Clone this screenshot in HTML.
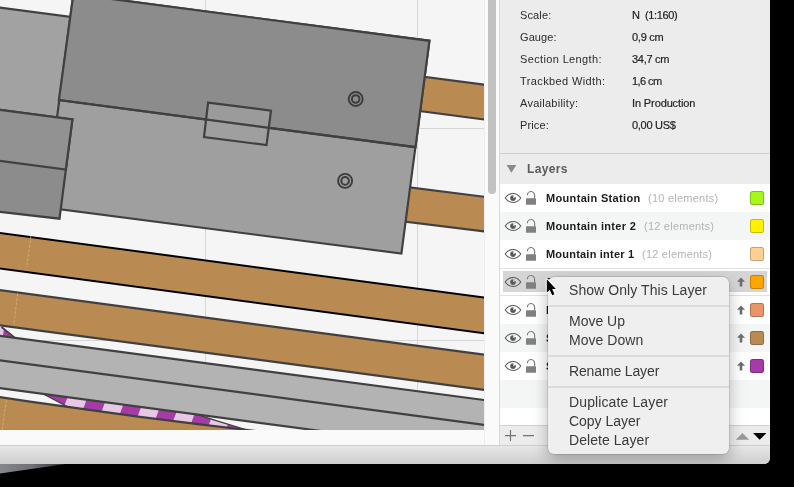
<!DOCTYPE html>
<html>
<head>
<meta charset="utf-8">
<style>
html,body{margin:0;padding:0;background:#000;}
body{width:794px;height:487px;position:relative;overflow:hidden;font-family:"Liberation Sans",sans-serif;}
#win{position:absolute;left:0;top:0;width:770px;height:464px;background:#ececec;border-bottom-right-radius:6px;overflow:hidden;}
#canvas{position:absolute;left:0;top:0;width:484px;height:430px;display:block;}
#vscroll{position:absolute;left:484px;top:0;width:15px;height:445px;background:#fafafa;box-sizing:border-box;border-left:1px solid #ededed;}
#vthumb{position:absolute;left:3px;top:-20px;width:8px;height:214px;border-radius:4px;background:#c2c2c2;}
#hscroll{position:absolute;left:0;top:430px;width:499px;height:15px;background:#fafafa;}
#pborder{position:absolute;left:499px;top:0;width:1px;height:445px;background:#d9d9d9;}
#bottom{position:absolute;left:0;top:445px;width:770px;height:19px;background:linear-gradient(#e7e7e7,#cecece);border-top:1px solid #cfcfcf;box-sizing:border-box;}
#panel{position:absolute;left:500px;top:0;width:270px;height:445px;background:#ececec;}
.lab,.val{position:absolute;font-size:11px;line-height:14px;color:#2b2b2b;white-space:nowrap;}
.lab{left:20px;}
.val{left:132px;color:#1f1f1f;-webkit-text-stroke:0.2px #1f1f1f;}
#sep{position:absolute;left:0;top:153px;width:270px;height:1px;background:#d0d0d0;}
#lhdr{position:absolute;left:27px;top:162px;letter-spacing:0.35px;font-size:12px;font-weight:bold;color:#5a5a5a;line-height:15px;}
#tri{position:absolute;left:7px;top:165px;width:0;height:0;border-left:4.7px solid transparent;border-right:4.7px solid transparent;border-top:8px solid #8a8a8a;}
#list{position:absolute;left:0;top:184px;width:270px;height:241px;background:#fff;overflow:hidden;}
.row{position:absolute;left:0;width:270px;height:28px;}
.row.alt{background:#f4f5f5;}
.nm{position:absolute;left:46px;top:7px;font-size:11px;font-weight:bold;color:#1c1c1c;line-height:14px;white-space:nowrap;}
.cnt{position:absolute;top:7px;font-size:11px;color:#b4b4b4;line-height:14px;white-space:nowrap;}
.sw{position:absolute;left:250px;top:7px;width:14px;height:14px;border-radius:2.5px;box-sizing:border-box;border:1px solid rgba(0,0,0,0.22);}
.eye{position:absolute;left:4px;top:7px;width:18px;height:14px;}
.lock{position:absolute;left:25px;top:6px;width:12px;height:16px;}
.up{position:absolute;left:236px;top:9px;width:10px;height:10px;}
#bbar{position:absolute;left:0;top:425px;width:270px;height:20px;background:#ececec;border-top:1px solid #d2d2d2;box-sizing:border-box;}
#menu{position:absolute;left:547.5px;top:277px;width:181px;height:177px;background:#efefef;border-radius:6px;box-shadow:0 0 0 0.5px rgba(0,0,0,0.22),0 6px 16px rgba(0,0,0,0.28);}
.mi{position:absolute;left:21.2px;font-size:14px;line-height:19px;color:#3a3a3a;white-space:nowrap;}
.ms{position:absolute;left:0;width:181px;height:2px;background:#dcdcdc;}
.row.sel{border-top:1px solid #e2e2e2;border-bottom:1px solid #e2e2e2;box-sizing:border-box;}
.row.sel .eye,.row.sel .lock,.row.sel .up,.row.sel .sw,.row.sel .nm{margin-top:-1px;}
.selbg{position:absolute;left:3px;top:2px;width:264px;height:21px;background:#d5d5d5;}
.lab,.val,.nm,.cnt,.mi,#lhdr{will-change:transform;}
</style>
</head>
<body>
<svg style="position:absolute;left:0;top:464px" width="80" height="12" viewBox="0 0 80 12"><defs><linearGradient id="wg" x1="0" y1="0" x2="1" y2="0"><stop offset="0" stop-color="#85878d"/><stop offset="0.5" stop-color="#6e7076"/><stop offset="1" stop-color="#2a2b2d"/></linearGradient></defs><polygon points="0,0 66,0 0,9.5" fill="url(#wg)"/></svg>
<div id="win">
<svg id="canvas" width="484" height="430" viewBox="0 0 484 430">
<rect x="0" y="0" width="484" height="430" fill="#f5f5f5"/>
<!-- grid -->
<g stroke="#d6d6d6" stroke-width="1">
<line x1="205.5" y1="0" x2="205.5" y2="430"/>
<line x1="417.5" y1="0" x2="417.5" y2="430"/>
<line x1="0" y1="128.5" x2="484" y2="128.5"/>
<line x1="0" y1="340.5" x2="484" y2="340.5"/>
</g>
<!-- brown stubs right of platform -->
<g fill="#b98b52" stroke="#404040" stroke-width="2.2">
<polygon points="380,71 490,85.3 490,120.3 380,105.8"/>
<polygon points="380,183.6 490,197.5 490,232.2 380,218.6"/>
</g>
<!-- upper-left light rect -->
<polygon points="-5,6.9 90,19.4 70,140 -5,130" fill="#a2a2a2" stroke="#404040" stroke-width="2.2"/>
<!-- big platform -->
<polygon points="73.4,-6 429.4,40.8 401.4,253.6 45.1,207.4" fill="#9f9f9f" stroke="#404040" stroke-width="2.2" stroke-linejoin="miter"/>
<polygon points="73.4,-6 429.4,40.8 415.5,147.2 58.9,100" fill="#8c8c8c" stroke="#404040" stroke-width="2.2"/>
<!-- small rect -->
<polygon points="208.1,102.6 271,110.6 266.5,145.1 204,137" fill="#9f9f9f" fill-opacity="0.8" stroke="#404040" stroke-width="2.2"/>
<line x1="58.9" y1="100" x2="415.5" y2="147.2" stroke="#404040" stroke-width="2.2"/>
<!-- circles -->
<g fill="none" stroke="#3c3c3c">
<circle cx="355.7" cy="99" r="7" stroke-width="1.9"/>
<circle cx="355.7" cy="99" r="3.8" stroke-width="2"/>
<circle cx="345.1" cy="180.9" r="7" stroke-width="1.9"/>
<circle cx="345.1" cy="180.9" r="3.8" stroke-width="2"/>
</g>
<!-- lower-left rect -->
<polygon points="-5,109.2 72.4,119.4 59.5,218.7 -5,211.2" fill="#8c8c8c" stroke="#404040" stroke-width="2.2"/>
<polygon points="-5,109.2 72.4,119.4 65.8,169.6 -5,160.1" fill="#929292" stroke="#404040" stroke-width="2.2"/>
<!-- long brown strips -->
<polygon points="-5,232.3 490,298.4 490,334 -5,267.9" fill="#b98b52" stroke="#000" stroke-width="2"/>
<polygon points="-5,289.5 490,355.5 490,390.6 -5,324.6" fill="#b98b52" stroke="#404040" stroke-width="2.2"/>
<!-- purple -->
<clipPath id="pc"><polygon points="40,392.2 170,406.4 194.4,413.9 250,431 75,431 75,410.7"/></clipPath>
<g clip-path="url(#pc)"><rect x="30" y="380" width="230" height="60" fill="#a63aa6"/><polygon points="74.1,380 94.1,380 73.6,434 53.6,434" fill="#e6c8e6"/><polygon points="113.5,380 132.7,380 112.2,434 93.0,434" fill="#e6c8e6"/><polygon points="151.4,380 170.3,380 149.8,434 130.9,434" fill="#e6c8e6"/><polygon points="188.7,380 207.5,380 187.0,434 168.2,434" fill="#e6c8e6"/><polygon points="225.8,380 244.8,380 224.2,434 205.3,434" fill="#e6c8e6"/></g>
<polygon points="40,392.2 170,406.4 194.4,413.9 250,431 75,431 75,410.7" fill="none" stroke="#404040" stroke-width="1.3"/>
<polygon points="-2,325.5 1.9,327.3 14.2,337.2 -2,335.5" fill="#a63aa6"/>
<polygon points="-2,325.5 1.9,327.3 3.9,328.9 2.9,336 -2,335.5" fill="#e6c8e6"/>
<line x1="1.5" y1="327" x2="14.4" y2="337.4" stroke="#404040" stroke-width="1.8"/>
<!-- grey strips -->
<polygon points="-5,335.3 490,400.8 490,453.6 -5,387.5" fill="#b3b3b3" stroke="#404040" stroke-width="2.2"/>
<line x1="-5" y1="359.6" x2="490" y2="425.7" stroke="#404040" stroke-width="2.2"/>
<!-- bottom brown -->
<polygon points="-5,396.4 30,401.7 100,411.3 140,416.9 200,424.3 260,431.5 260,440 -5,440" fill="#b98b52" stroke="#404040" stroke-width="2.2"/>
<g stroke="#d8b98c" stroke-width="0.8" stroke-dasharray="3 1.5" opacity="0.85">
<line x1="30.9" y1="236" x2="26.6" y2="268.5"/>
<line x1="17.6" y1="293.5" x2="13.8" y2="325.5"/>
<line x1="6.3" y1="400" x2="2.2" y2="430"/>
</g>
</svg>
<div id="hscroll"></div>
<div id="vscroll"><div id="vthumb"></div></div>
<div id="pborder"></div>
<div id="panel">
<div class="lab" style="top:8px;letter-spacing:0.13px">Scale:</div><div class="val" style="top:8px;letter-spacing:-0.37px">N&nbsp; (1:160)</div>
<div class="lab" style="top:30px;letter-spacing:0.07px">Gauge:</div><div class="val" style="top:30px;letter-spacing:-0.26px">0,9 cm</div>
<div class="lab" style="top:52px;letter-spacing:0.36px">Section Length:</div><div class="val" style="top:52px;letter-spacing:-0.27px">34,7 cm</div>
<div class="lab" style="top:74px;letter-spacing:0.39px">Trackbed Width:</div><div class="val" style="top:74px;letter-spacing:-0.57px">1,6 cm</div>
<div class="lab" style="top:96px;letter-spacing:0.26px">Availability:</div><div class="val" style="top:96px;letter-spacing:-0.12px">In Production</div>
<div class="lab" style="top:118px;letter-spacing:0.12px">Price:</div><div class="val" style="top:118px;letter-spacing:-0.29px">0,00 US$</div>
<div id="sep"></div>
<svg style="position:absolute;left:0;top:160px" width="24" height="16" viewBox="0 0 24 16"><polygon points="6.6,4.9 16.3,4.9 11.45,12.7" fill="#8a8a8a"/></svg>
<div id="lhdr">Layers</div>
<div id="list">
<div class="row" style="top:0px"><svg class="eye" viewBox="0 0 18 14"><path d="M1.2 7 C3.6 3.5 6.5 2.45 9 2.45 C11.5 2.45 14.4 3.5 16.8 7 C14.4 10.5 11.5 11.55 9 11.55 C6.5 11.55 3.6 10.5 1.2 7 Z" fill="none" stroke="#5a5a5a" stroke-width="1.1"/><path d="M9 7 L9.6 4.2 A2.9 2.9 0 1 0 11.7 6.0 Z" fill="#5a5a5a"/></svg><svg class="lock" viewBox="0 0 12 16"><rect x="1" y="8.2" width="10" height="6.6" rx="0.6" fill="#808080"/><path d="M2.4 5.3 V5.1 A3.6 3.6 0 0 1 9.6 5.1 V8.4" fill="none" stroke="#808080" stroke-width="1.2"/></svg><div class="nm" style="letter-spacing:0.33px">Mountain Station</div><div class="cnt" style="left:147.6px;letter-spacing:0.24px">(10 elements)</div><div class="sw" style="background:#a6f71c"></div></div>
<div class="row alt" style="top:28px"><svg class="eye" viewBox="0 0 18 14"><path d="M1.2 7 C3.6 3.5 6.5 2.45 9 2.45 C11.5 2.45 14.4 3.5 16.8 7 C14.4 10.5 11.5 11.55 9 11.55 C6.5 11.55 3.6 10.5 1.2 7 Z" fill="none" stroke="#5a5a5a" stroke-width="1.1"/><path d="M9 7 L9.6 4.2 A2.9 2.9 0 1 0 11.7 6.0 Z" fill="#5a5a5a"/></svg><svg class="lock" viewBox="0 0 12 16"><rect x="1" y="8.2" width="10" height="6.6" rx="0.6" fill="#808080"/><path d="M2.4 5.3 V5.1 A3.6 3.6 0 0 1 9.6 5.1 V8.4" fill="none" stroke="#808080" stroke-width="1.2"/></svg><div class="nm" style="letter-spacing:0.33px">Mountain inter 2</div><div class="cnt" style="left:143.6px;letter-spacing:0.23px">(12 elements)</div><div class="sw" style="background:#fff200"></div></div>
<div class="row" style="top:56px"><svg class="eye" viewBox="0 0 18 14"><path d="M1.2 7 C3.6 3.5 6.5 2.45 9 2.45 C11.5 2.45 14.4 3.5 16.8 7 C14.4 10.5 11.5 11.55 9 11.55 C6.5 11.55 3.6 10.5 1.2 7 Z" fill="none" stroke="#5a5a5a" stroke-width="1.1"/><path d="M9 7 L9.6 4.2 A2.9 2.9 0 1 0 11.7 6.0 Z" fill="#5a5a5a"/></svg><svg class="lock" viewBox="0 0 12 16"><rect x="1" y="8.2" width="10" height="6.6" rx="0.6" fill="#808080"/><path d="M2.4 5.3 V5.1 A3.6 3.6 0 0 1 9.6 5.1 V8.4" fill="none" stroke="#808080" stroke-width="1.2"/></svg><div class="nm" style="letter-spacing:0.21px">Mountain inter 1</div><div class="cnt" style="left:142.4px;letter-spacing:0.23px">(12 elements)</div><div class="sw" style="background:#ffcf94"></div></div>
<div class="row sel" style="top:84px"><div class="selbg"></div><svg class="eye" viewBox="0 0 18 14"><path d="M1.2 7 C3.6 3.5 6.5 2.45 9 2.45 C11.5 2.45 14.4 3.5 16.8 7 C14.4 10.5 11.5 11.55 9 11.55 C6.5 11.55 3.6 10.5 1.2 7 Z" fill="none" stroke="#5a5a5a" stroke-width="1.1"/><path d="M9 7 L9.6 4.2 A2.9 2.9 0 1 0 11.7 6.0 Z" fill="#5a5a5a"/></svg><svg class="lock" viewBox="0 0 12 16"><rect x="1" y="8.2" width="10" height="6.6" rx="0.6" fill="#808080"/><path d="M2.4 5.3 V5.1 A3.6 3.6 0 0 1 9.6 5.1 V8.4" fill="none" stroke="#808080" stroke-width="1.2"/></svg><div class="nm">Base</div><svg class="up" viewBox="0 0 10 10"><path d="M5 0.6 L9 4.8 H6.3 V9.4 H3.7 V4.8 H1 Z" fill="#6e6e6e"/></svg><div class="sw" style="background:#ffa500"></div></div>
<div class="row" style="top:112px"><svg class="eye" viewBox="0 0 18 14"><path d="M1.2 7 C3.6 3.5 6.5 2.45 9 2.45 C11.5 2.45 14.4 3.5 16.8 7 C14.4 10.5 11.5 11.55 9 11.55 C6.5 11.55 3.6 10.5 1.2 7 Z" fill="none" stroke="#5a5a5a" stroke-width="1.1"/><path d="M9 7 L9.6 4.2 A2.9 2.9 0 1 0 11.7 6.0 Z" fill="#5a5a5a"/></svg><svg class="lock" viewBox="0 0 12 16"><rect x="1" y="8.2" width="10" height="6.6" rx="0.6" fill="#808080"/><path d="M2.4 5.3 V5.1 A3.6 3.6 0 0 1 9.6 5.1 V8.4" fill="none" stroke="#808080" stroke-width="1.2"/></svg><div class="nm">Base</div><svg class="up" viewBox="0 0 10 10"><path d="M5 0.6 L9 4.8 H6.3 V9.4 H3.7 V4.8 H1 Z" fill="#6e6e6e"/></svg><div class="sw" style="background:#e8956a"></div></div>
<div class="row alt" style="top:140px"><svg class="eye" viewBox="0 0 18 14"><path d="M1.2 7 C3.6 3.5 6.5 2.45 9 2.45 C11.5 2.45 14.4 3.5 16.8 7 C14.4 10.5 11.5 11.55 9 11.55 C6.5 11.55 3.6 10.5 1.2 7 Z" fill="none" stroke="#5a5a5a" stroke-width="1.1"/><path d="M9 7 L9.6 4.2 A2.9 2.9 0 1 0 11.7 6.0 Z" fill="#5a5a5a"/></svg><svg class="lock" viewBox="0 0 12 16"><rect x="1" y="8.2" width="10" height="6.6" rx="0.6" fill="#808080"/><path d="M2.4 5.3 V5.1 A3.6 3.6 0 0 1 9.6 5.1 V8.4" fill="none" stroke="#808080" stroke-width="1.2"/></svg><div class="nm">Sub</div><svg class="up" viewBox="0 0 10 10"><path d="M5 0.6 L9 4.8 H6.3 V9.4 H3.7 V4.8 H1 Z" fill="#6e6e6e"/></svg><div class="sw" style="background:#b98b52"></div></div>
<div class="row" style="top:168px"><svg class="eye" viewBox="0 0 18 14"><path d="M1.2 7 C3.6 3.5 6.5 2.45 9 2.45 C11.5 2.45 14.4 3.5 16.8 7 C14.4 10.5 11.5 11.55 9 11.55 C6.5 11.55 3.6 10.5 1.2 7 Z" fill="none" stroke="#5a5a5a" stroke-width="1.1"/><path d="M9 7 L9.6 4.2 A2.9 2.9 0 1 0 11.7 6.0 Z" fill="#5a5a5a"/></svg><svg class="lock" viewBox="0 0 12 16"><rect x="1" y="8.2" width="10" height="6.6" rx="0.6" fill="#808080"/><path d="M2.4 5.3 V5.1 A3.6 3.6 0 0 1 9.6 5.1 V8.4" fill="none" stroke="#808080" stroke-width="1.2"/></svg><div class="nm">Sub</div><svg class="up" viewBox="0 0 10 10"><path d="M5 0.6 L9 4.8 H6.3 V9.4 H3.7 V4.8 H1 Z" fill="#6e6e6e"/></svg><div class="sw" style="background:#a63aa6"></div></div>
<div class="row alt" style="top:196px"></div>
</div>
<div id="bbar">
<svg style="position:absolute;left:0;top:0" width="270" height="20" viewBox="0 0 270 20">
<path d="M5 9.6 H16 M10.5 4.1 V15.1 M23 9.6 H34" stroke="#727272" stroke-width="1.15" fill="none"/>
<path d="M235.8 13.8 L242.5 7 L249.2 13.8 Z" fill="#9a9a9a"/>
<path d="M253 7 L266.4 7 L259.7 13.8 Z" fill="#000"/>
</svg></div>
</div>
<div id="bottom"></div>
<div id="menu">
<div class="mi" style="top:4px;letter-spacing:0.07px">Show Only This Layer</div>
<div class="ms" style="top:28px"></div>
<div class="mi" style="top:35px;letter-spacing:-0.00px">Move Up</div>
<div class="mi" style="top:54px;letter-spacing:0.04px">Move Down</div>
<div class="ms" style="top:78px"></div>
<div class="mi" style="top:85px;letter-spacing:-0.14px">Rename Layer</div>
<div class="ms" style="top:109px"></div>
<div class="mi" style="top:116px;letter-spacing:0.12px">Duplicate Layer</div>
<div class="mi" style="top:135px;letter-spacing:-0.03px">Copy Layer</div>
<div class="mi" style="top:154px;letter-spacing:0.06px">Delete Layer</div>
</div>
<svg id="cursor" style="position:absolute;left:540px;top:272px" width="30" height="30" viewBox="0 0 30 30">
<path d="M6.8 7.2 L6.8 20.6 L9.8 17.9 L12.2 23.2 L14.5 22.2 L12.1 17 L15.9 17 Z" fill="#000" stroke="#fff" stroke-width="2.2" stroke-linejoin="round" paint-order="stroke"/>
</svg>

</div>
</body>
</html>
